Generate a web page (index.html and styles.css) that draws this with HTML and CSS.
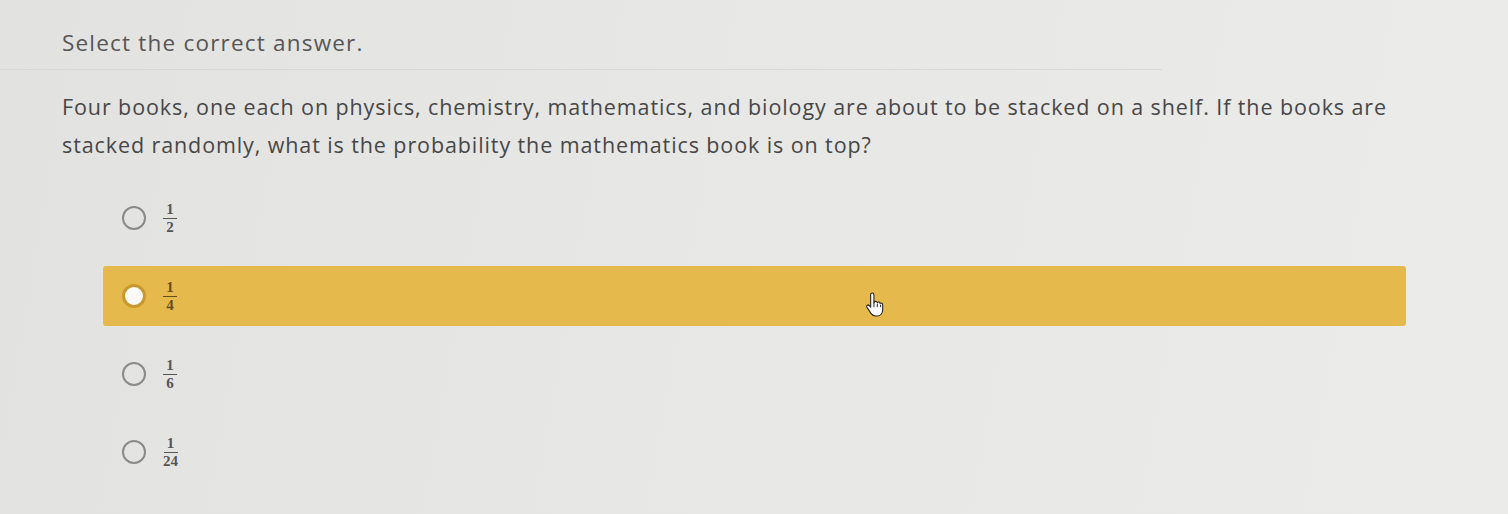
FILE: index.html
```html
<!DOCTYPE html>
<html lang="en">
<head>
<meta charset="utf-8">
<title>Select the correct answer</title>
<link rel="stylesheet" href="styles.css">
</head>
<body>
<div class="page">
  <div class="header">
    <h1 class="title">Select the correct answer.</h1>
  </div>
  <p class="question">Four books, one each on physics, chemistry, mathematics, and biology are about to be stacked on a shelf. If the books are stacked randomly, what is the probability the mathematics book is on top?</p>
  <div class="options">
    <div class="option">
      <span class="radio"></span>
      <span class="frac"><span class="num">1</span><span class="den">2</span></span>
    </div>
    <div class="option selected">
      <span class="radio"></span>
      <span class="frac"><span class="num">1</span><span class="den">4</span></span>
      <svg class="cursor" width="20" height="26" viewBox="0 0 18 24" aria-hidden="true">
        <path d="M5 2.5c0-1 .7-1.6 1.5-1.6S8 1.5 8 2.5V10l.3-.2c.3-.9 1-1.3 1.7-1.1.6.1 1 .6 1.1 1.2.4-.6 1.1-.8 1.7-.6.6.2.9.8.9 1.300.4-.4 1-.5 1.5-.3.6.3.9.9.9 1.6v4.5c0 3.3-2 5.8-5.3 5.8H9.6c-2 0-3.2-.9-4.3-2.5L1.6 14.2c-.5-.8-.4-1.6.2-2 .7-.5 1.5-.2 2 .4L5 14z" fill="#fff" stroke="#222" stroke-width="1" stroke-linejoin="round"/>
        <path d="M8 10v4M11.1 10.8V14M14.2 11.7V14" stroke="#222" stroke-width="0.9" fill="none"/>
      </svg>
    </div>
    <div class="option">
      <span class="radio"></span>
      <span class="frac"><span class="num">1</span><span class="den">6</span></span>
    </div>
    <div class="option">
      <span class="radio"></span>
      <span class="frac"><span class="num">1</span><span class="den">24</span></span>
    </div>
  </div>
</div>
</body>
</html>
```

FILE: styles.css
```css
html, body {
  margin: 0;
  padding: 0;
}

body {
  background: linear-gradient(100deg, #e2e2e1 0%, #e7e7e6 45%, #ebebea 100%);
  width: 1508px;
  height: 514px;
  overflow: hidden;
  font-family: "Open Sans", "Noto Sans", sans-serif;
  color: #4a4a4a;
}

.page {
  position: relative;
  padding-top: 28px;
}

.header {
  padding-left: 62px;
  border-bottom: 1px solid #d8d8d7;
  height: 41px;
  width: 1100px;
}

.title {
  margin: 0;
  font-size: 22.5px;
  line-height: 30px;
  font-weight: 400;
  color: #565656;
  letter-spacing: 1.2px;
}

.question {
  margin: 18px 0 0 62px;
  width: 1340px;
  font-size: 21.5px;
  line-height: 38px;
  color: #474747;
  letter-spacing: 0.9px;
}

.options {
  margin: 24px 0 0 103px;
  width: 1303px;
  display: flex;
  flex-direction: column;
  gap: 18px;
}

.option {
  position: relative;
  height: 60px;
  display: flex;
  align-items: center;
  padding-left: 19px;
  border-radius: 3px;
}

.option.selected {
  background: #e6b94c;
}

.radio {
  width: 20px;
  height: 20px;
  border: 2px solid #8a8a8a;
  border-radius: 50%;
  box-sizing: content-box;
  background: transparent;
}

.selected .radio {
  background: #fbfaf6;
  border: 3px solid #c9982e;
  width: 18px;
  height: 18px;
}

.frac {
  margin-left: 17px;
  display: inline-flex;
  flex-direction: column;
  align-items: center;
  font-family: "Liberation Serif", "DejaVu Serif", serif;
  font-size: 15px;
  line-height: 15px;
  font-weight: 700;
  color: #555555;
}

.selected .frac {
  color: #654d1c;
}

.num {
  padding: 0 2px 1px;
  border-bottom: 1.3px solid currentColor;
}

.den {
  padding-top: 1px;
}

.frac .num, .frac .den {
  min-width: 10px;
  text-align: center;
}

.cursor {
  position: absolute;
  left: 762px;
  top: 26px;
}
```
